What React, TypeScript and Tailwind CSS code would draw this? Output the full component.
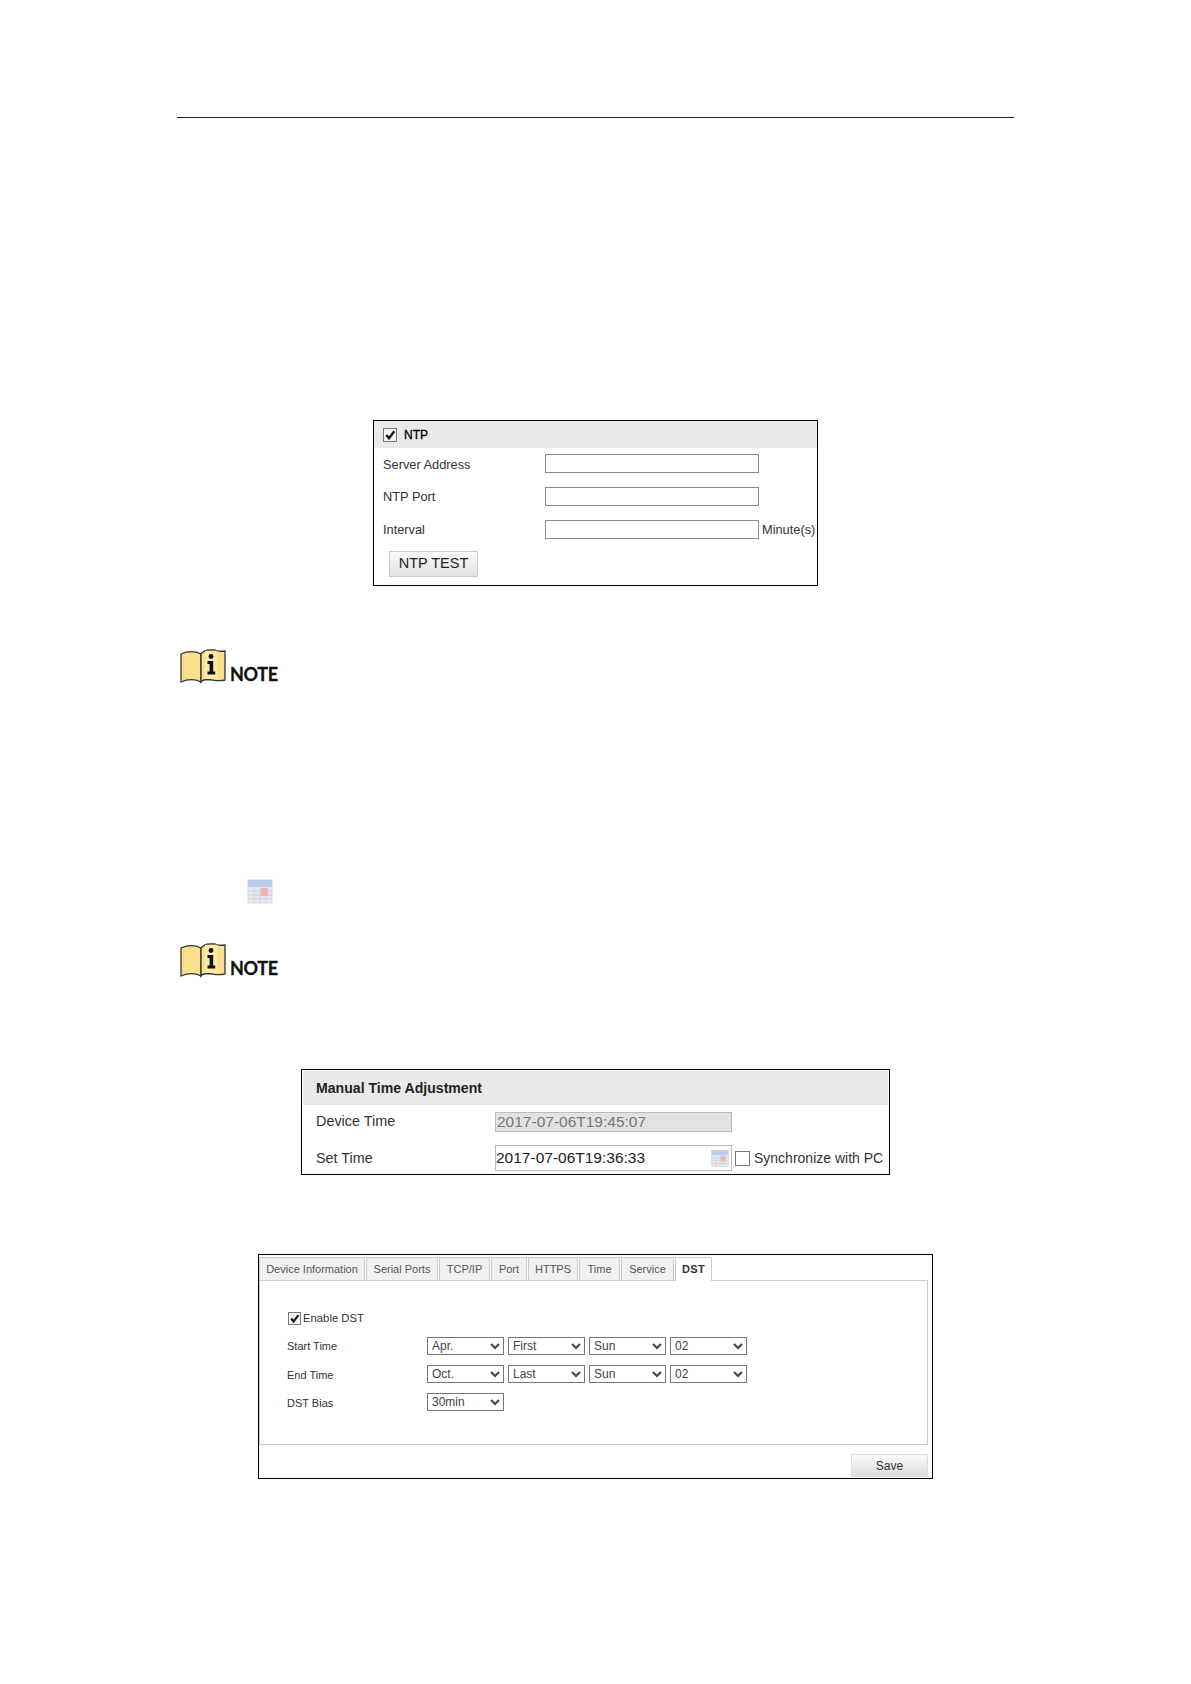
const font = "font-['Liberation_Sans',Arial,sans-serif]";

function Check({ size, box }: { size: string; box: string }) {
  return (
    <span className={`${size} ${box} flex items-center justify-center bg-[#f4f4f4] shrink-0`}>
      <svg viewBox="0 0 14 14" className="w-full h-full">
        <path d="M2.8 7 L5.8 10.8 L12 2.6" fill="none" stroke="#1a1a1a" strokeWidth="2.8" />
      </svg>
    </span>
  );
}

function Field({ w = "w-[214px]" }: { w?: string }) {
  return <input readOnly className={`${w} h-[19px] border border-[#8a8a8a] bg-white outline-none`} />;
}

function Note() {
  return (
    <div className="flex items-end ml-[3px] h-[35px]">
      <svg width="46" height="35" viewBox="0 0 46 35" className="shrink-0">
        <path d="M1 5 C8 2 15 2 21 5 V33 C15 30 8 30 1 33 Z" fill="#fbdf8c" stroke="#333" strokeWidth="1.3" />
        <path d="M21 5 C23 2.5 26 1 30 1 H35 C38 2.5 41 2.5 45 2 V31 C39 32.5 34 31 28 30.5 C25 30.5 22 31.5 21 33 Z" fill="#fbdf8c" stroke="#333" strokeWidth="1.3" />
        <rect x="25" y="1.8" width="12" height="28" fill="#fce9ac" />
        <circle cx="31" cy="7.5" r="2.4" fill="#111" />
        <path d="M27.5 12 H33.2 V22.5 H35.2 V25.5 H27.5 V22.5 H29.6 V15 H27.5 Z" fill="#111" />
      </svg>
      <span className="ml-[4px] mb-[-2px] font-['Lato',sans-serif] font-bold text-[18px] leading-[24px] tracking-[-0.3px] text-[#111] [-webkit-text-stroke:0.3px_#111]">NOTE</span>
    </div>
  );
}

function CalendarIcon({ cls }: { cls: string }) {
  return (
    <svg viewBox="0 0 26 26" className={`${cls} blur-[0.5px]`}>
      <rect x="1" y="2" width="24" height="23" fill="#e6e9f2" stroke="#d4d7e0" />
      <rect x="1" y="2" width="24" height="7" fill="#bccdee" />
      <path d="M1 13 H25 M1 17 H25 M1 21 H25 M7 9 V25 M13 9 V25 M19 9 V25" stroke="#ccd0da" strokeWidth="1" />
      <rect x="14" y="10" width="7" height="8" fill="#efb5b8" />
    </svg>
  );
}

function Sel({ v }: { v: string }) {
  return (
    <select defaultValue={v} className="w-[77px] h-[18px] border border-[#767676] bg-white text-[12px] text-[#444] font-['Liberation_Sans',sans-serif] rounded-none">
      <option>{v}</option>
    </select>
  );
}

const tabs: [string, string][] = [
  ["Device Information", "w-[106px]"],
  ["Serial Ports", "w-[72px]"],
  ["TCP/IP", "w-[51px]"],
  ["Port", "w-[36px]"],
  ["HTTPS", "w-[50px]"],
  ["Time", "w-[41px]"],
  ["Service", "w-[53px]"],
];

function DstRow({ label, vals, offset }: { label: string; vals: string[]; offset: string }) {
  return (
    <div className="flex items-center h-[18px]">
      <span className={`w-[140px] ${offset} text-[11px] text-[#333]`}>{label}</span>
      <div className="flex gap-[4px]">
        {vals.map((v, i) => (
          <Sel key={i} v={v} />
        ))}
      </div>
    </div>
  );
}

export default function App() {
  return (
    <div className={`${font} w-full h-[1684px] bg-white pt-[117px] overflow-hidden`}>
      <div className="w-[837px] mx-auto flex flex-col">
        <div className="h-px bg-[#222]" />

        {/* NTP */}
        <div className="self-center mt-[302px] w-[445px] h-[166px] border border-black flex flex-col">
          <div className="h-[27px] bg-[#e9e9e9] flex items-center pl-[9px] gap-[7px]">
            <Check size="w-[14px] h-[14px]" box="border border-[#777]" />
            <span className="text-[12px] text-black [-webkit-text-stroke:0.3px_#000]">NTP</span>
          </div>
          <div className="flex items-center h-[19px] mt-[6px] pl-[9px]">
            <span className="w-[162px] pt-[2px] text-[12.8px] text-[#333]">Server Address</span>
            <Field />
          </div>
          <div className="flex items-center h-[19px] mt-[14px] pl-[9px]">
            <span className="w-[162px] pt-[1px] text-[12.8px] text-[#333]">NTP Port</span>
            <Field />
          </div>
          <div className="flex items-center h-[19px] mt-[14px] pl-[9px]">
            <span className="w-[162px] pt-[1px] text-[12.8px] text-[#333]">Interval</span>
            <Field />
            <span className="ml-[3px] pt-[1px] text-[12.8px] text-[#333] whitespace-nowrap">Minute(s)</span>
          </div>
          <div className="mt-[12px] ml-[15px] w-[89px] h-[26px] border border-[#ccc] bg-gradient-to-b from-[#fafafa] to-[#e2e2e2] flex items-center justify-center text-[14.5px] text-[#222]">
            NTP TEST
          </div>
        </div>

        <div className="mt-[63px]"><Note /></div>

        <div className="mt-[194px] ml-[70px] h-[26px]"><CalendarIcon cls="w-[26px] h-[26px]" /></div>

        <div className="mt-[39px]"><Note /></div>

        {/* Manual Time */}
        <div className="self-center mt-[91px] w-[589px] h-[106px] border border-black p-px flex flex-col">
          <div className="h-[34px] pt-px bg-[#e9e9e9] flex items-center pl-[13px] text-[14.1px] font-bold text-[#222]">
            Manual Time Adjustment
          </div>
          <div className="flex items-center h-[21px] mt-[6px] pl-[13px]">
            <span className="w-[179px] text-[14.4px] text-[#333]">Device Time</span>
            <div className="w-[237px] h-[20px] border border-[#bbb] bg-[#e2e2e2] flex items-center pl-[1px] text-[15.5px] text-[#777]">
              2017-07-06T19:45:07
            </div>
          </div>
          <div className="flex items-center h-[26px] mt-[13px] pl-[13px]">
            <span className="w-[179px] pt-px text-[14.4px] text-[#333]">Set Time</span>
            <div className="w-[237px] h-[26px] border border-[#bbb] bg-white flex items-center justify-between pr-[2px] text-[15.5px] text-[#222]">
              2017-07-06T19:36:33
              <CalendarIcon cls="w-[18px] h-[18px]" />
            </div>
            <span className="ml-[3px] w-[15px] h-[15px] border border-[#777] bg-white shrink-0" />
            <span className="ml-[4px] text-[14px] text-[#333] whitespace-nowrap">Synchronize with PC</span>
          </div>
        </div>

        {/* DST */}
        <div className="self-center mt-[79px] w-[675px] h-[225px] border border-black flex flex-col pt-[2px] pr-[4px]">
          <div className="flex h-[24px] gap-[1px] relative z-10">
            {tabs.map(([t, w]) => (
              <div key={t} className={`${w} h-[23px] bg-[#f1f1f1] border border-b-0 border-[#ccc] flex items-center justify-center text-[11px] text-[#555] whitespace-nowrap`}>
                {t}
              </div>
            ))}
            <div className="w-[37px] h-[24px] bg-white border border-b-0 border-[#ccc] flex items-center justify-center text-[11px] font-bold text-[#333] tracking-[0.3px]">
              DST
            </div>
          </div>
          <div className="h-[165px] -mt-px border border-[#ccc] pl-[27px] pt-[31px]">
            <div className="flex items-center h-[13px] gap-[2px] ml-px">
              <Check size="w-[13px] h-[13px]" box="border border-[#777]" />
              <span className="text-[11.3px] text-[#333]">Enable DST</span>
            </div>
            <div className="mt-[12px] flex flex-col gap-[10px]">
              <DstRow label="Start Time" offset="pt-0" vals={["Apr.", "First", "Sun", "02"]} />
              <DstRow label="End Time" offset="pt-[2px]" vals={["Oct.", "Last", "Sun", "02"]} />
              <DstRow label="DST Bias" offset="pt-[3px]" vals={["30min"]} />
            </div>
          </div>
          <div className="self-end mt-[9px] w-[77px] h-[23px] border border-[#ddd] bg-gradient-to-b from-[#fafafa] to-[#dedede] flex items-center justify-center text-[12px] text-[#333]">
            Save
          </div>
        </div>
      </div>
    </div>
  );
}
